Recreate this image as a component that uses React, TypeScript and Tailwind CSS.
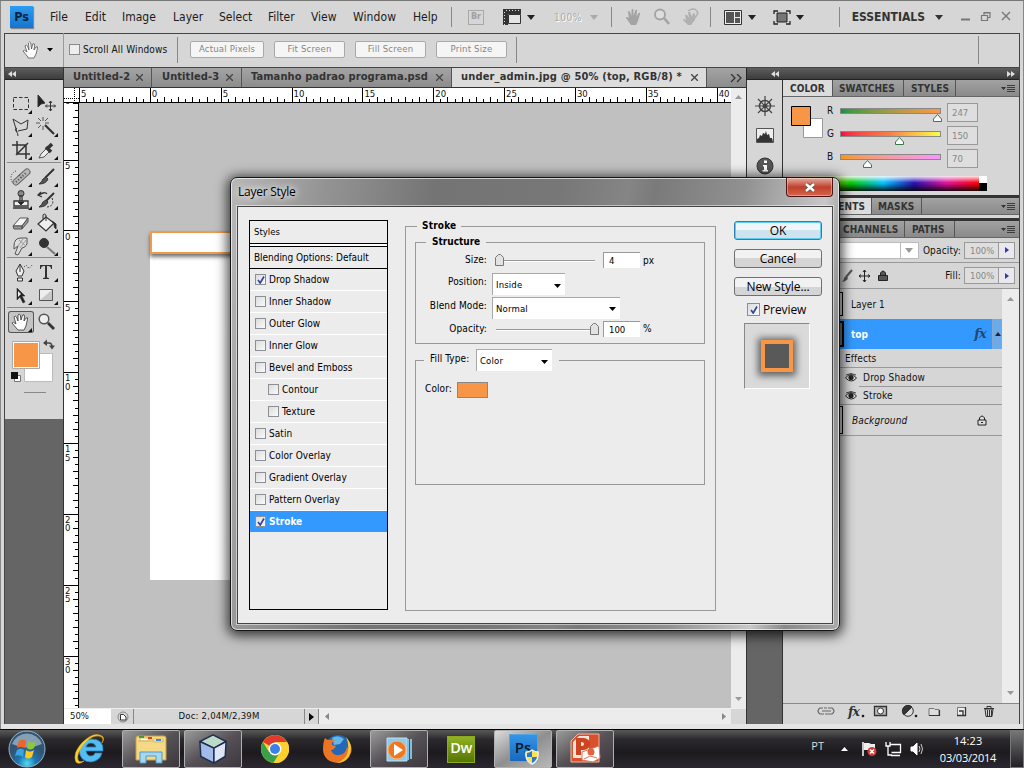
import React from "react";

const UI = "font-['DejaVu_Sans_Condensed','DejaVu_Sans',sans-serif]";
const SEGOE = "font-['Open_Sans','Noto_Sans',sans-serif]";

function Caret({ className = "" }: { className?: string }) {
  return (
    <svg width="8" height="5" viewBox="0 0 8 5" className={className}>
      <path d="M0 0h8L4 5z" fill="currentColor" />
    </svg>
  );
}

function MenuBar() {
  return (
    <div className="flex h-[33px] shrink-0 items-center border-t border-[#777] pl-[10px] text-[12px] text-[#1c1c1c]">
      <div className="flex h-[22px] w-[23px] items-center justify-center bg-gradient-to-b from-[#2f9bee] to-[#1374cf] text-[12.500px] font-bold leading-none text-[#06223f] shadow-[1px_1px_1px_#888]">
        Ps
      </div>
      <div className="ml-[17px] flex">
        <span className="w-[35px]">File</span>
        <span className="w-[37px]">Edit</span>
        <span className="w-[51px]">Image</span>
        <span className="w-[46px]">Layer</span>
        <span className="w-[49px]">Select</span>
        <span className="w-[43px]">Filter</span>
        <span className="w-[42px]">View</span>
        <span className="w-[60px] tracking-[.1px]">Window</span>
        <span className="w-[38px]">Help</span>
      </div>
      <div className="h-5 w-px bg-[#888]" />
      <div className="ml-[16px] flex h-[15px] w-[16px] items-center justify-center border border-[#a8a8a8] text-[9px] font-bold text-[#a0a0a0]">Br</div>
      <svg width="19" height="16" viewBox="0 0 19 16" className="ml-[19px]">
        <path d="M0 0h18v5H5v11H0z" fill="#333" />
        <path d="M5.500 5.500h12v9h-12z" fill="#e4e4e4" stroke="#333" />
        <path d="M3 1.500h15M1.500 3v13" stroke="#ddd" strokeDasharray="1 2" />
      </svg>
      <Caret className="ml-[5px] text-[#222]" />
      <span className="ml-[19px] text-[10px] tracking-[.5px] text-[#aaa] [text-shadow:1px_1px_0_#fff]">100%</span>
      <Caret className="ml-[8px] text-[#aaa]" />
      <div className="ml-[13px] h-5 w-px bg-[#888]" />
      <svg width="74" height="18" viewBox="0 0 74 18" className="ml-[14px]">
        <path d="M5 17L0 10q0-2 3 0L2 4q1-2 2 0l1.500 4V2q1-2 2 0v6l2-6q2-1 1.500 1L10.500 9l2-4q2-1 1.500 1l-2 7-2 4z" fill="#a3a3a3" />
        <circle cx="34" cy="6.500" r="5" fill="#ddd" stroke="#a3a3a3" strokeWidth="1.800" />
        <path d="M38 10l5 6" stroke="#a3a3a3" strokeWidth="2.500" />
        <path d="M62 17l-5-5q0-2 3 0l-1-5 2 0 2 3-1-6h2l2 5 1-4 2 1v6l-4 5z" fill="#b0b0b0" />
        <path d="M62 3q7-5 10 2l-3 5" fill="none" stroke="#b0b0b0" strokeWidth="1.500" />
      </svg>
      <div className="ml-[10px] h-5 w-px bg-[#888]" />
      <svg width="18" height="15" viewBox="0 0 18 15" className="ml-[13px]">
        <path d="M.5.500h17v14H.5z" fill="#eee" stroke="#333" />
        <path d="M2 2h8v11H2zM11 2h5v5h-5zM11 8h5v5h-5z" fill="#555" />
      </svg>
      <Caret className="ml-[6px] text-[#222]" />
      <svg width="18" height="15" viewBox="0 0 18 15" className="ml-[17px]">
        <path d="M4 3h10v9H4z" fill="#777" stroke="#222" />
        <path d="M1 4V1h4M13 1h4v3M17 11v3h-4M5 14H1v-3" fill="none" stroke="#222" strokeWidth="1.300" />
      </svg>
      <Caret className="ml-[5px] text-[#222]" />
      <div className="ml-[35px] h-5 w-px bg-[#888]" />
      <span className="ml-[12px] w-[75px] whitespace-nowrap text-[12px] font-bold tracking-[0px] text-[#333]">ESSENTIALS</span>
      <Caret className="ml-[8px] text-[#333]" />
      <svg width="50" height="12" viewBox="0 0 50 12" className="ml-[18px]" fill="none" stroke="#777">
        <path d="M0 8.500h9" strokeWidth="2" />
        <path d="M20.500 4.500h6v5h-6zM23 4V1.500h6v5h-2M23 2h6" strokeWidth="1.200" />
        <path d="M41 1l8 8m0-8l-8 8" strokeWidth="1.400" />
      </svg>
    </div>
  );
}

function OptionsBar() {
  const btn = "flex h-[17px] items-center justify-center rounded-[2px] border border-[#a9a9a9] bg-[#f5f5f5] text-[9.500px] tracking-[.2px] text-[#858585]";
  return (
    <div className="flex h-[34px] shrink-0 items-center border-b border-[#444] bg-[#d6d6d6] pb-[2px] text-[10px]">
      <div className="ml-[4px] h-[24px] w-[4px] bg-[radial-gradient(#777_35%,transparent_45%)] bg-[length:2px_2px]" />
      <svg width="18" height="18" viewBox="0 0 18 18" className="ml-[9px]">
        <path d="M6 16L1 10q1-2 4 1L3 5q1-2 2.500 0L7 9 6.500 2q1-2 2.300 0L9.500 8l1.200-5q2-1 2 1L12 9l2-3q2-1 1.500 1L14 13l-2 4H6z" fill="#fff" stroke="#555" strokeWidth=".8" />
      </svg>
      <svg width="6" height="4" className="ml-[7px]"><path d="M0 0h6L3 3.500z" /></svg>
      <div className="ml-[10px] h-[34px] w-px bg-[#999]" />
      <div className="ml-[5px] h-[11px] w-[11px] border border-[#8b8b8b] bg-[#eee]" />
      <span className="ml-[3px] w-[86px] whitespace-nowrap tracking-[.15px]">Scroll All Windows</span>
      <div className="ml-[8px] h-[26px] w-px bg-[#888]" />
      <div className={`ml-[12px] w-[74px] ${btn}`}>Actual Pixels</div>
      <div className={`ml-[10px] w-[71px] ${btn}`}>Fit Screen</div>
      <div className={`ml-[10px] w-[71px] ${btn}`}>Fill Screen</div>
      <div className={`ml-[10px] w-[71px] ${btn}`}>Print Size</div>
      <div className="ml-[9px] h-[26px] w-px bg-[#888]" />
      <div className="ml-auto mr-[40px] h-[28px] w-px bg-[#888]" />
    </div>
  );
}

function Tool({ children, mark = true, active = false }: { children: React.ReactNode; mark?: boolean; active?: boolean }) {
  return (
    <svg
      width="26"
      height="22"
      viewBox="0 0 26 22"
      fill="none"
      stroke="#333"
      className={active ? "rounded-[3px] bg-[#c4c4c4] shadow-[inset_0_0_0_1px_#555]" : ""}
    >
      {children}
      {mark && <path d="M24 17v4h-4z" fill="#111" stroke="none" />}
    </svg>
  );
}

function Toolbox() {
  const row = "flex h-[23px] items-center";
  const sep = "h-px bg-[#8a8a8a] mx-[2px]";
  return (
    <div className="flex w-[59px] shrink-0 flex-col border-r border-[#333] bg-[#656565]">
      <div className="flex h-[11px] shrink-0 items-center bg-gradient-to-b from-[#5e5e5e] to-[#3c3c3c] pl-[3px]">
        <svg width="8" height="6" fill="#ddd"><path d="M4 0v6L0 3zM8 0v6L4 3z" /></svg>
      </div>
      <div className="h-[340px] border-t border-[#222] bg-[#d6d6d6]">
        <div className="mx-[5px] mt-[4px] h-[4px] bg-[radial-gradient(#777_35%,transparent_45%)] bg-[length:2px_2px]" />
        <div className="mt-[4px] pb-[1px] pl-[3px]">
          <div className={row}>
            <Tool><path d="M5.500 4.500h15v12h-15z" strokeDasharray="3.500 2" /></Tool>
            <Tool mark={false}>
              <path d="M4 2v12l3-3 4-1z" fill="#222" />
              <path d="M16.500 8v10M11.500 13h10M15 10l1.500-2 1.500 2M15 16l1.500 2 1.500-2M13 11.500L11.500 13l1.500 1.500M20 11.500l1.500 1.500-1.500 1.500" />
            </Tool>
          </div>
          <div className={row}>
            <Tool><path d="M9 16L5 3l8 5 7-4-1 9-9 2M9 12q-3 1-1 3t2 5" strokeWidth="1" /></Tool>
            <Tool>
              <path d="M11 9l9 9" strokeWidth="2.200" />
              <path d="M9 1v4M9 10v4M2 7h4M11 7h4M4 2l3 3M14 2l-3 3M4 12l3-3" stroke="#555" />
            </Tool>
          </div>
          <div className={row}>
            <Tool><path d="M9 2v13h13M4 6h14v14M8 16L20 4" strokeWidth="1.500" /></Tool>
            <Tool>
              <path d="M5 19l2-4 6-6 3 3-6 6z" fill="#eee" stroke="#555" />
              <path d="M12 8l5 5M14 9l4-4" strokeWidth="3.500" />
            </Tool>
          </div>
        </div>
        <div className={sep} />
        <div className="pl-[3px] pt-[2px]">
          <div className={row}>
            <Tool>
              <path d="M8 5q-5 2-5 7t5 6" strokeDasharray="1 1.500" />
              <path d="M8 16L19 6" strokeWidth="7" strokeLinecap="round" stroke="#666" />
              <path d="M8 16L19 6" strokeWidth="5" strokeLinecap="round" stroke="#b7b7b7" />
              <path d="M8 16L19 6M11 9l4 4" strokeWidth="2" strokeDasharray="1 2" stroke="#555" />
            </Tool>
            <Tool>
              <path d="M20 3l-9 9" strokeWidth="2" />
              <path d="M12 11l2 2q-2 5-9 5 3-2 4-5z" fill="#555" />
            </Tool>
          </div>
          <div className={row}>
            <Tool>
              <circle cx="13" cy="4.500" r="3" fill="#888" />
              <path d="M12 7h2v5h-2zM6 12h14v5H6zM5 19h16" fill="#eee" strokeWidth="1.300" />
              <path d="M10 13h6l-3 3z" fill="#222" />
            </Tool>
            <Tool>
              <path d="M20 4l-8 8" strokeWidth="2" />
              <path d="M12 11l2 2q-2 5-9 5 3-2 4-5z" fill="#555" />
              <path d="M7 3L4 6l4 2M5 6q6-4 8-1" strokeWidth="1.300" />
              <path d="M18 9q3 8-5 9" strokeDasharray="2 1.500" />
            </Tool>
          </div>
          <div className={row}>
            <Tool>
              <path d="M5 14l7-8h8l-6 8z" fill="#f4f4f4" stroke="#555" />
              <path d="M5 14h9v3H6zM14 14l6-8v4l-6 7z" fill="#999" stroke="#555" />
            </Tool>
            <Tool>
              <path d="M4 12l8-7 8 6-8 8z" fill="#eee" strokeWidth="1.200" />
              <path d="M12 9V3q-2-2-3 0v4" />
              <path d="M18 9l4 3v5q-2-1-2-5z" fill="#222" />
            </Tool>
          </div>
          <div className={row}>
            <Tool>
              <path d="M6 11q0-8 7-8h6v6q-2 4-5 4l-4 7-3-1 3-8-4 3z" fill="#ddd" stroke="#555" />
              <path d="M11 5l7 6M15 4l-5 7M18 5l-6 8" stroke="#999" />
            </Tool>
            <Tool>
              <circle cx="10" cy="8" r="4.500" fill="#333" />
              <path d="M13 12l8 7" stroke="#777" strokeWidth="2" />
            </Tool>
          </div>
        </div>
        <div className={sep} />
        <div className="pb-[1px] pl-[3px] pt-[2px]">
          <div className={row}>
            <Tool>
              <path d="M12 3l4 7-2 5h-4l-2-5zM12 4v7M9.500 17h5v3h-5z" fill="#eee" />
              <path d="M16 6q3-3 4 0t4-2" strokeDasharray="1 1.500" />
            </Tool>
            <Tool>
              <path d="M6 4h12v4h-1q0-3-3-3h-1v11q0 1 2 1v1H9v-1q2 0 2-1V5h-1Q7 5 7 8H6z" fill="#333" stroke="none" />
            </Tool>
          </div>
          <div className={row}>
            <Tool><path d="M9 4v12l3-3 3 6 2-1-3-6h3z" fill="#222" strokeWidth=".6" /><path d="M10 7v6l3-3z" fill="#eee" stroke="none" /></Tool>
            <Tool>
              <path d="M5.500 5.500h13v11h-13z" fill="#c8c8c8" stroke="#555" />
              <path d="M6 16V6h12z" fill="#eee" stroke="none" />
            </Tool>
          </div>
        </div>
        <div className={sep} />
        <div className="pl-[3px] pt-[2px]">
          <div className={row}>
            <Tool active>
              <path d="M10 19L4 12q1-2 4 1L6 6q1-2 2.500 0L10 10 10 4q1-2 2.300 0L13 9l1.500-5q2-1 2 1L16 10l2-3q2-1 1.500 1L18 15l-2 4z" fill="#fff" strokeWidth=".8" />
            </Tool>
            <Tool mark={false}>
              <circle cx="10" cy="8" r="4.800" fill="#eee" stroke="#555" strokeWidth="1.500" />
              <path d="M14 12l6 6" strokeWidth="2.800" />
            </Tool>
          </div>
        </div>
        <svg width="50" height="60" viewBox="0 0 50 60" className="ml-[4px] mt-[4px]">
          <path d="M15.500 16.500h28v28h-28z" fill="#fff" stroke="#bbb" />
          <path d="M3.500 4.500h27v27h-27z" fill="#fff" stroke="#aaa" />
          <path d="M5 6h24v24H5z" fill="#f79646" />
          <path d="M36 6h4q3 0 3 4" fill="none" stroke="#444" strokeWidth="1.500" />
          <path d="M38 2.500L34 6l4 3zM40 8.500h6l-3 4z" fill="#444" />
          <path d="M5.500 38.500h6v6h-6z" fill="#fff" stroke="#777" />
          <path d="M2 35h7v7H2z" fill="#111" />
          <path d="M15 55.500h22" stroke="#888" />
        </svg>
      </div>
    </div>
  );
}

const TICKS = Array.from({ length: 95 }, (_, i) => i);

function TopRuler() {
  const labels = ["5", "0", "5", "10", "15", "20", "25", "30", "35", "40"];
  return (
    <svg width="667" height="15" viewBox="0 0 667 15" className="block bg-white">
      {TICKS.map((i) => (
        <rect key={i} x={Math.round(15 + i * 7.085)} y={i % 10 === 0 ? 0 : i % 2 === 0 ? 9 : 11} width="1" height="14" />
      ))}
      {labels.map((t, i) => (
        <text key={i} x={17 + i * 70.85} y="8.500" fontSize="9.500" fill="#111">{t}</text>
      ))}
      <path d="M0 10.500h15M10.500 0v15" stroke="#000" strokeDasharray="1 1" />
      <rect x="0" y="14" width="667" height="1" />
      <rect x="15" y="0" width="1" height="15" />
    </svg>
  );
}

function SideRuler() {
  const labels = ["0", "5", "0", "5", "10", "15", "20", "25", "30"];
  return (
    <svg width="15" height="605" viewBox="0 0 15 605" className="block shrink-0 bg-white">
      {TICKS.slice(0, 92).map((i) => {
        const y = Math.round(-14.3 + i * 7.085);
        return <rect key={i} y={y} x={i % 10 === 0 ? 0 : i % 2 === 0 ? 9 : 11} width="14" height="1" />;
      })}
      {labels.map((t, i) =>
        t.split("").map((c, j) => (
          <text key={`${i}-${j}`} x="1" y={-14.3 + i * 70.85 + 9.300 + (i === 0 ? 6 : 0) + j * 8.300} fontSize="9.500" fill="#111">{c}</text>
        )),
      )}
      <rect x="14" width="1" height="605" />
    </svg>
  );
}

function DocTab({ children, className }: { children: string; className: string }) {
  return (
    <div className={`flex items-center whitespace-nowrap border-r border-[#555] pl-[9px] pr-[8px] ${className}`}>
      <span className="flex-1">{children}</span>
      <svg width="7" height="7" stroke="#444" strokeWidth="1.300"><path d="M0 0l7 7m0-7l-7 7" /></svg>
    </div>
  );
}

function Workspace() {
  return (
    <div className="flex w-[682px] shrink-0 flex-col">
      <div className="flex h-[20px] border-b border-[#333] bg-gradient-to-b from-[#a4a4a4] to-[#8c8c8c] text-[11px] font-bold text-[#333]">
        <DocTab className="w-[88px] tracking-[.1px]">Untitled-2</DocTab>
        <DocTab className="w-[90px] pl-[10px] tracking-[.1px]">Untitled-3</DocTab>
        <DocTab className="w-[210px] tracking-[.1px]">Tamanho padrao programa.psd</DocTab>
        <DocTab className="w-[255px] bg-[#dcdcdc] tracking-[.17px]">under_admin.jpg @ 50% (top, RGB/8) *</DocTab>
        <svg width="12" height="9" className="ml-[23px] mt-[6px]" fill="none" stroke="#333" strokeWidth="1.300"><path d="M1 0l4 4-4 4M7 0l4 4-4 4" /></svg>
      </div>
      <div className="flex h-[620px]">
        <div className="flex w-[667px] flex-col">
          <TopRuler />
          <div className="flex h-[605px]">
            <SideRuler />
            <div className="flex-1 overflow-hidden bg-[#c0c0c0] pl-[71px] pt-[128px]">
              <div className="h-[349px] w-[400px] bg-white">
                <div className="h-[23px] border-2 border-[#f09a4c] bg-white shadow-[0_3px_4px_rgba(0,0,0,.55)]" />
              </div>
            </div>
          </div>
        </div>
        <div className="flex flex-1 flex-col items-center justify-between bg-[#ececec] py-[7px]">
          <svg width="7" height="4"><path d="M0 4h7L3.500 0z" fill="#999" /></svg>
          <svg width="7" height="4"><path d="M0 0h7L3.500 4z" fill="#999" /></svg>
        </div>
      </div>
      <div className="flex h-[16px] items-center border-t border-[#eee] bg-[#d6d6d6] text-[9.500px]">
        <div className="flex h-full w-[47px] items-center bg-white pl-[6px]">50%</div>
        <svg width="12" height="12" className="ml-[6px]" fill="none" stroke="#333"><circle cx="6" cy="6" r="5" stroke="#888" /><path d="M3.500 3.500h3l2.500 2.500v3h-5.500z" fill="#fff" /></svg>
        <div className="ml-[4px] flex h-full w-[171px] items-center justify-center border-l border-[#888] tracking-[.2px]">Doc: 2,04M/2,39M</div>
        <div className="flex h-full w-[15px] items-center justify-center border-x border-[#888]"><svg width="5" height="8"><path d="M0 0v8l5-4z" /></svg></div>
        <div className="flex h-full flex-1 items-center justify-between bg-[#ececec] pl-[6px] pr-[5px]">
          <svg width="4" height="7"><path d="M4 0v7L0 3.500z" fill="#888" /></svg>
          <svg width="4" height="7"><path d="M0 0v7l4-3.500z" fill="#888" /></svg>
        </div>
        <div className="h-full w-[15px] bg-[#d6d6d6]" />
      </div>
    </div>
  );
}

function PanelTabs({ children, className = "" }: { children: React.ReactNode; className?: string }) {
  return (
    <div className={`flex h-[17px] shrink-0 border-b border-[#666] bg-gradient-to-b from-[#a2a2a2] to-[#8a8a8a] text-[10px] font-bold tracking-[.1px] text-[#333] ${className}`}>
      {children}
      <svg width="14" height="8" className="ml-auto mr-[4px] mt-[5px]" stroke="#333">
        <path d="M0 2h5L2.500 5z" fill="#333" stroke="none" />
        <path d="M6 .5h8M6 2.500h8M6 4.500h8M6 6.500h8" strokeWidth=".9" />
      </svg>
    </div>
  );
}

function PTab({ children, className }: { children: string; className: string }) {
  return <div className={`flex h-full items-center whitespace-nowrap border-r border-[#555] ${className}`}>{children}</div>;
}

function ColorRow({ label, value, grad, thumb }: { label: string; value: string; grad: string; thumb: string }) {
  return (
    <div className="flex h-[23px] items-start">
      <span className="w-[13px] text-[10px] leading-[9px]">{label}</span>
      <div className="mt-[2px] w-[101px]">
        <div className={`h-[6px] border border-[#888] bg-gradient-to-r ${grad}`} />
        <svg width="9" height="8" className={thumb}><path d="M4.500.500L8.500 5v2.500h-8V5z" fill="#fff" stroke="#3a7a4a" /></svg>
      </div>
      <div className="ml-[6px] mt-[-3px] h-[19px] w-[31px] border border-[#999] bg-[#dedede] pl-[4px] text-[9.500px] leading-[18px] text-[#888]">{value}</div>
    </div>
  );
}

function Eye() {
  return (
    <svg width="12" height="9" viewBox="0 0 12 9" className="shrink-0">
      <path d="M.5 5q5-7 11 0-5 6-11 0z" fill="#ddd" stroke="#222" />
      <circle cx="6" cy="4.500" r="2.600" fill="#222" />
      <path d="M1 2q5-3 10 0" stroke="#444" fill="none" />
    </svg>
  );
}

function Percent({ label }: { label: string }) {
  return (
    <div className="flex items-center text-[10px]">
      <span className="mr-[3px] tracking-[.15px]">{label}</span>
      <div className="h-[17px] w-[35px] border border-[#999] bg-[#dedede] pl-[5px] text-[9.500px] leading-[15px] text-[#888]">100%</div>
      <div className="flex h-[17px] w-[16px] items-center justify-center border border-l-0 border-[#999] bg-[#e8e8ee]"><svg width="4" height="6"><path d="M0 0v6l4-3z" fill="#3a3a99" /></svg></div>
    </div>
  );
}

function Lock() {
  return <svg width="10" height="11" viewBox="0 0 10 11"><path d="M2.500 5V3q2.500-4 5 0v2M1 5h8v5H1zM4 7.500h2" fill="#ddd" stroke="#222" /></svg>;
}

function Layers() {
  return (
    <>
      <PanelTabs>
        <div className="w-[54px]" />
        <PTab className="w-[68px] pl-[6px]">CHANNELS</PTab>
        <PTab className="w-[50px] pl-[7px]">PATHS</PTab>
      </PanelTabs>
      <div className="flex h-[25px] items-center justify-end border-b border-[#999] pr-[4px]">
        <div className="mr-[4px] flex h-[17px] w-[120px] border border-[#bbb] bg-white">
          <div className="flex-1" />
          <div className="flex w-[18px] items-center justify-center border-l border-[#bbb]"><Caret className="text-[#999]" /></div>
        </div>
        <Percent label="Opacity:" />
      </div>
      <div className="flex h-[26px] items-center border-b border-[#999] pr-[4px]">
        <svg width="52" height="14" viewBox="0 0 52 14" className="ml-[57px]" fill="none" stroke="#222">
          <path d="M12 1L6 8" strokeWidth="2" stroke="#555" /><path d="M6 7l2 2q-1 3-6 4 2-2 2-4z" fill="#555" stroke="none" />
          <path d="M24.500 1v12M19 7h11M23 3l1.500-2L26 3M23 11l1.500 2 1.500-2M21 5.500L19 7l2 1.500M28 5.500L30 7l-2 1.500" />
          <path d="M40.500 6V4q2.500-4 5 0v2M38.500 6.500h9v5h-9z" fill="#555" />
        </svg>
        <div className="flex-1" />
        <Percent label="Fill:" />
      </div>
      <div className="flex flex-1 text-[10px]">
        <div className="w-[219px]">
          <div className="flex h-[30px] items-center"><div className="h-[24px] w-[60px] border border-black" /><span className="ml-[8px]">Layer 1</span></div>
          <div className="flex h-[30px] items-center bg-[#3399ff] font-bold text-white">
            <div className="h-[26px] w-[61px] border-2 border-black bg-[#777]" />
            <span className="ml-[7px] flex-1">top</span>
            <span className="mr-[6px] font-['DejaVu_Serif',serif] text-[13px] italic tracking-[-.8px] text-[#26466c]">fx</span>
            <div className="flex h-full w-[10px] items-center justify-center border-l border-[#87a8cc] bg-[#6babea]"><svg width="6" height="4"><path d="M0 4h6L3 0z" fill="#223" /></svg></div>
          </div>
          <div className="flex h-[18px] items-center pl-[62px] tracking-[.1px]">Effects</div>
          <div className="flex h-[19px] items-center gap-[6px] border-t border-[#999] pl-[62px] tracking-[.2px]"><Eye />Drop Shadow</div>
          <div className="ml-[76px] h-px bg-[#999]" />
          <div className="flex h-[18px] items-center gap-[6px] border-b border-[#999] pl-[62px] tracking-[.2px]"><Eye />Stroke</div>
          <div className="flex h-[31px] items-center border-b border-[#999] pr-[15px]">
            <div className="h-[28px] w-[60px] border border-black" />
            <span className="ml-[9px] flex-1 italic tracking-[.15px]">Background</span>
            <Lock />
          </div>
        </div>
        <div className="flex flex-1 flex-col items-center justify-between bg-[#ececec] py-[8px]">
          <svg width="7" height="4"><path d="M0 4h7L3.500 0z" fill="#999" /></svg>
          <svg width="7" height="4"><path d="M0 0h7L3.500 4z" fill="#999" /></svg>
        </div>
      </div>
      <div className="flex h-[21px] shrink-0 items-center border-t border-[#888] pb-[6px]">
        <svg width="190" height="16" viewBox="0 0 190 16" className="ml-[34px]" fill="none" stroke="#333">
          <path d="M6 5H3q-4 3 0 6h4M11 5h4q4 3 0 6h-4M5 8h9M7 5l3 0M8 11h3" stroke="#666" strokeWidth="1.200" />
          <text x="31" y="13" fontSize="12.500" letterSpacing="-.8" fontStyle="italic" fontWeight="bold" fill="#333" stroke="none" className="font-['DejaVu_Serif',serif]">fx</text>
          <path d="M45 12h2v2h-2z" fill="#111" strokeWidth=".4" />
          <path d="M57.500 3.500h12v9h-12z" fill="#bbb" strokeWidth="1.300" /><circle cx="63.500" cy="8" r="3" fill="#fff" />
          <circle cx="91" cy="8" r="5.300" fill="#ddd" /><path d="M87 12a5.500 5.500 0 0 1 8-8z" fill="#333" /><path d="M98 12h2v2h-2z" fill="#111" strokeWidth=".4" />
          <path d="M112 12.500V5.500h5l1 1h4v6z" fill="#ddd" stroke="#777" /><path d="M112 12.500h10.500V7" strokeWidth="1.200" />
          <path d="M140.500 4.500h8v8h-8z" fill="#eee" stroke="#777" /><path d="M148.500 4v8.500h-8.500M142 8h4v4" strokeWidth="1.300" />
          <path d="M168 6h8l-1 7.500h-6zM167 5.500h10M170 5V3.500h4V5M170.500 7v6M172.500 7v6M174.500 7v6" />
        </svg>
      </div>
    </>
  );
}

function RightDock() {
  return (
    <div className="flex flex-1 flex-col bg-[#656565]">
      <div className="flex h-[11px] shrink-0 items-center justify-between border-l border-[#222] bg-gradient-to-b from-[#5e5e5e] to-[#3c3c3c] pl-[24px] pr-[4px]">
        <svg width="8" height="6" fill="#ddd"><path d="M4 0v6L0 3zM8 0v6L4 3z" /></svg>
        <svg width="8" height="6" fill="#ddd"><path d="M0 0v6l4-3zM4 0v6l4-3z" /></svg>
      </div>
      <div className="flex flex-1 border-t border-[#222]">
        <div className="w-[37px] shrink-0 border-x border-[#333]">
          <div className="flex h-[400px] flex-col items-center bg-[#d6d6d6]">
            <div className="mt-[4px] h-[4px] w-[27px] bg-[radial-gradient(#777_35%,transparent_45%)] bg-[length:2px_2px]" />
            <svg width="20" height="20" viewBox="0 0 20 20" className="mt-[8px]" fill="none" stroke="#444">
              <circle cx="10" cy="10" r="5.500" strokeWidth="1.500" /><circle cx="10" cy="10" r="2" fill="#555" />
              <path d="M10 0v20M0 10h20M3 3l14 14M17 3L3 17" strokeWidth="1.200" />
            </svg>
            <svg width="18" height="15" viewBox="0 0 18 15" className="mt-[12px]">
              <path d="M.5.500h17v14H.5z" fill="#eee" stroke="#555" />
              <path d="M1 14v-3l2-1 1-3 2 1 1-3 2 1 1-3 1 4 2-1 1 4 2 0 1 4z" fill="#333" />
            </svg>
            <svg width="18" height="18" viewBox="0 0 18 18" className="mt-[14px]">
              <circle cx="9" cy="9" r="8" fill="#555" stroke="#333" />
              <path d="M8 3.500h3v2.500H8zM7 8h4v5h1v1.500H6.500V13H8V9.500H7z" fill="#fff" />
            </svg>
          </div>
        </div>
        <div className="flex flex-1 flex-col bg-[#d6d6d6]">
          <PanelTabs>
            <PTab className="w-[50px] bg-[#dcdcdc] pl-[7px]">COLOR</PTab>
            <PTab className="w-[71px] pl-[6px]">SWATCHES</PTab>
            <PTab className="w-[52px] pl-[7px]">STYLES</PTab>
          </PanelTabs>
          <div className="h-[98px] shrink-0 pt-[9px]">
            <div className="flex h-[70px] pl-[8px]">
              <svg width="36" height="36" viewBox="0 0 36 36" className="shrink-0">
                <path d="M12.500 12.500h19v19h-19z" fill="#fff" stroke="#999" />
                <path d="M.5.500h19v19H.5z" fill="#f79646" stroke="#000" />
              </svg>
              <div className="flex flex-1 flex-col">
                <ColorRow label="R" value="247" grad="from-[#009646] to-[#ff9646]" thumb="ml-[93px]" />
                <ColorRow label="G" value="150" grad="from-[#f70046] via-[#f78046] to-[#f7ff46]" thumb="ml-[55px]" />
                <ColorRow label="B" value="70" grad="from-[#f79600] to-[#f796ff]" thumb="ml-[23px]" />
              </div>
            </div>
            <div className="ml-[5px] flex h-[15px] w-[199px]">
              <div className="flex-1 bg-[linear-gradient(to_bottom,rgba(255,255,255,.9),rgba(255,255,255,0)_45%,rgba(0,0,0,0)_50%,rgba(0,0,0,.85)),linear-gradient(to_right,#f00,#ff0_16%,#0c0_33%,#00bfff_50%,#2a10b0_66%,#e0109a_83%,#f00)]" />
              <div className="w-[8px] bg-gradient-to-b from-white from-50% to-black to-50%" />
            </div>
          </div>
          <div className="h-[3px] shrink-0 bg-[#333]" />
          <PanelTabs>
            <PTab className="w-[89px] justify-end bg-[#dcdcdc] pr-[6px]">ADJUSTMENTS</PTab>
            <PTab className="w-[50px] pl-[6px]">MASKS</PTab>
          </PanelTabs>
          <div className="h-[6px] shrink-0 border-b-[3px] border-[#333]" />
          <Layers />
        </div>
      </div>
    </div>
  );
}

function Check({ on = false, size = "h-[11px] w-[11px]" }: { on?: boolean; size?: string }) {
  return (
    <span className={`flex shrink-0 items-center justify-center border border-[#8c8f94] bg-gradient-to-br from-[#dcdcdc] to-[#fafafa] ${size}`}>
      {on && <svg width="8" height="8" viewBox="0 0 8 8"><path d="M1 4l2.200 3L7 .5" fill="none" stroke="#31479c" strokeWidth="1.700" /></svg>}
    </span>
  );
}

function StyleRow({ label, on, sub }: { label: string; on?: boolean; sub?: boolean }) {
  return (
    <div className={`flex h-[22px] items-center gap-[3px] border-b border-white ${sub ? "pl-[18px]" : "pl-[5px]"}`}>
      <Check on={on} />
      <span className="whitespace-nowrap tracking-[.05px]">{label}</span>
    </div>
  );
}

function Slider({ end = false }: { end?: boolean }) {
  return (
    <svg width="110" height="14" viewBox="0 0 110 14">
      <path d="M4 7.500h99" stroke="#999" /><path d="M4 8.500h99" stroke="#fff" />
      <path d={end ? "M98.500 12.500v-8l3-3h2l3 3v8z" : "M3.500 12.500v-8l3-3h2l3 3v8z"} fill="#e2e2e2" stroke="#777" />
    </svg>
  );
}

function Select({ children, className }: { children: string; className: string }) {
  return (
    <div className={`flex h-[22px] items-center justify-between border-l border-t border-[#a8a8a8] bg-white pl-[3px] pr-[4px] pt-[2px] text-[9.500px] tracking-[.15px] ${className}`}>
      <span>{children}</span>
      <svg width="7" height="4"><path d="M0 0h7L3.500 4z" /></svg>
    </div>
  );
}

function Field({ children }: { children: string }) {
  return <div className="h-[16px] w-[37px] border-l border-t border-[#999] bg-white pl-[5px] text-[9.500px] leading-[16px]">{children}</div>;
}

function LayerStyleDialog() {
  const label = "w-[71px] shrink-0 whitespace-nowrap text-right tracking-[.1px] pb-[2px]";
  return (
    <div className="absolute left-[230px] top-[177px] flex h-[454px] w-[610px] flex-col rounded-[7px] border border-[#151515] bg-[linear-gradient(100deg,#b8b8b8_0%,#939393_14%,#8c8c8c_18%,#747474_30%,#777_48%,#858585_58%,#7a7a7a_62%,#919191_75%,#c8c8c8_87%,#8a8a8a_92%,#aaa_100%)] px-[6px] pb-[6px] shadow-[0_2px_12px_3px_rgba(0,0,0,.7),inset_0_0_0_1px_rgba(255,255,255,.65)]">
      <div className="flex h-[28px] shrink-0 justify-between">
        <span className={`pl-[1px] pt-[4px] text-[12px] leading-[19px] tracking-[-.25px] text-black [text-shadow:0_0_8px_#fff,0_0_6px_#fff] ${SEGOE}`}>Layer Style</span>
        <div className="flex h-[19px] w-[47px] items-center justify-center rounded-b-[4px] border border-t-0 border-[#4c1515] bg-gradient-to-b from-[#e1a193] from-5% via-[#bd402c] via-50% to-[#d9634a] shadow-[inset_0_0_0_1px_rgba(255,255,255,.35)]">
          <svg width="12" height="11" viewBox="0 0 12 11"><path d="M2 2l8 7m0-7L2 9" stroke="#554" strokeWidth="4" /><path d="M2 2l8 7m0-7L2 9" stroke="#fff" strokeWidth="2.500" /></svg>
        </div>
      </div>
      <div className="flex flex-1 border border-[#444] bg-[#ececec] pl-[11px] pt-[13px] text-[10px] text-black shadow-[0_0_0_1px_rgba(255,255,255,.5)]">
        <div className="h-[390px] w-[139px] border border-black">
          <div className="flex h-[22px] items-center pl-[4px] text-[9.500px]">Styles</div>
          <div className="h-[4px] border-y border-black bg-white" />
          <div className="flex h-[22px] items-center whitespace-nowrap border-b border-black pl-[4px] tracking-[-.05px]">Blending Options: Default</div>
          <StyleRow label="Drop Shadow" on />
          <StyleRow label="Inner Shadow" />
          <StyleRow label="Outer Glow" />
          <StyleRow label="Inner Glow" />
          <StyleRow label="Bevel and Emboss" />
          <StyleRow label="Contour" sub />
          <StyleRow label="Texture" sub />
          <StyleRow label="Satin" />
          <StyleRow label="Color Overlay" />
          <StyleRow label="Gradient Overlay" />
          <StyleRow label="Pattern Overlay" />
          <div className="flex h-[21px] items-center gap-[3px] bg-[#3399ff] pl-[5px] font-bold text-white"><Check on />Stroke</div>
        </div>
        <fieldset className="ml-[17px] h-[391px] w-[311px] border border-[#999] px-[9px]">
          <legend className="ml-[2px] px-[5px] text-[10px] font-bold leading-[12px] tracking-[.2px]">Stroke</legend>
          <fieldset className="mt-[4px] h-[108px] w-[290px] border border-[#999]">
            <legend className="ml-[10px] px-[6px] text-[10px] font-bold leading-[12px]">Structure</legend>
            <div className="flex h-[24px] items-center"><span className={label}>Size:</span><div className="ml-[5px]"><Slider /></div><div className="ml-[1px] mr-[3px]"><Field>4</Field></div>px</div>
            <div className="flex h-[24px] items-center"><span className={`${label} pb-[5px]`}>Position:</span><Select className="ml-[5px] w-[73px]">Inside</Select></div>
            <div className="flex h-[23px] items-center"><span className={`${label} pb-[5px]`}>Blend Mode:</span><Select className="ml-[5px] w-[128px]">Normal</Select></div>
            <div className="flex h-[20px] items-center"><span className={label}>Opacity:</span><div className="ml-[5px]"><Slider end /></div><div className="ml-[1px] mr-[3px]"><Field>100</Field></div><span className="pb-[2px]">%</span></div>
          </fieldset>
          <fieldset className="mt-[5px] h-[136px] w-[290px] border border-[#999]">
            <legend className="ml-[8px] flex h-[22px] items-center pl-[6px] pr-[7px]"><span className="w-[46px] shrink-0 whitespace-nowrap pb-[4px] tracking-[.1px]">Fill Type:</span><Select className="w-[76px]">Color</Select></legend>
            <div className="mt-[10px] flex items-center pl-[9px]"><span className="w-[32px] shrink-0 pb-[2px] tracking-[.1px]">Color:</span><div className="h-[16px] w-[31px] border border-[#888] bg-[#f79646]" /></div>
          </fieldset>
        </fieldset>
        <div className={`ml-[18px] flex w-[88px] flex-col pt-[1px] text-[12px] tracking-[-.1px] ${SEGOE}`}>
          <div className="flex h-[19px] items-center justify-center rounded-[3px] border border-[#2c7fae] bg-gradient-to-b from-[#eef6fa] from-50% to-[#cfe3ee] to-50% shadow-[inset_0_0_0_1px_#5fcdf0]">OK</div>
          <div className="mt-[9px] flex h-[19px] items-center justify-center rounded-[3px] border border-[#707070] bg-gradient-to-b from-[#f2f2f2] from-50% to-[#d5d5d5] to-50%">Cancel</div>
          <div className="mt-[9px] flex h-[19px] items-center justify-center whitespace-nowrap rounded-[3px] border border-[#707070] bg-gradient-to-b from-[#f2f2f2] from-50% to-[#d5d5d5] to-50%">New Style...</div>
          <div className="mt-[4px] flex h-[19px] items-center gap-[3px] pl-[13px]"><Check on size="h-[13px] w-[13px]" />Preview</div>
          <div className="ml-[10px] mt-[4px] flex h-[66px] w-[66px] items-center justify-center border border-b-white border-r-white border-l-[#888] border-t-[#888] bg-[#dadada]">
            <div className="h-[32px] w-[32px] border-4 border-[#f79646] bg-[#595959] shadow-[0_1px_7px_3px_rgba(0,0,0,.55)]" />
          </div>
        </div>
      </div>
    </div>
  );
}

function TaskButton({ children, className = "from-[#9b9b9b] via-[#555156] to-[#3c383d]" }: { children: React.ReactNode; className?: string }) {
  return <div className={`flex h-[38px] w-[58px] items-center justify-center rounded-[2px] border border-[#b0b0b0] bg-gradient-to-br ${className}`}>{children}</div>;
}

function Taskbar() {
  return (
    <div className="flex h-[39px] shrink-0 items-center border-t border-black bg-[linear-gradient(to_bottom,#595959,#2b292c_25%,#1c1a1e_60%,#2c2831)]">
      <svg width="38" height="38" viewBox="0 0 38 38" className="ml-[8px]">
        <defs>
          <radialGradient id="orb" cx=".5" cy=".9"><stop offset="0" stopColor="#50dcf5" /><stop offset=".5" stopColor="#1e75ad" /><stop offset="1" stopColor="#335574" /></radialGradient>
        </defs>
        <circle cx="19" cy="19" r="18" fill="url(#orb)" stroke="#94b5c8" />
        <path d="M4 14a16 16 0 0 1 30 0q-15 7-30 0z" fill="#bcd1de" opacity=".6" />
        <path d="M11 11q4-3 7 0l-1 7q-4-2-8 0z" fill="#f0642b" />
        <path d="M20 11q4 3 8 0l-2 7q-4 3-7 0z" fill="#8ec63f" />
        <path d="M9 20q4-3 7 0l-1 7q-4-3-8-1z" fill="#39a5e4" />
        <path d="M18 20q4 3 8 0l-2 7q-4 3-7 0z" fill="#fdc922" />
      </svg>
      <svg width="32" height="32" viewBox="0 0 32 32" className="ml-[28px]">
        <path d="M28 20h-7q-1 3-4 3-4 0-5-5h17q1-12-12-12Q6 7 5 17q1 12 12 12 9-1 11-9zM12 14q1-4 5-4t5 4z" fill="#56bdf0" stroke="#1a83c8" strokeWidth=".8" />
        <path d="M28 3q-8-5-19 6T2 29q3 3 8-1-5 2-6-1Q2 20 11 10T28 4q2 2 0 6 3-5 0-7z" fill="#fcd12a" stroke="#e5ab1a" strokeWidth=".6" />
      </svg>
      <TaskButton className="ml-[16px] from-[#9b9b9b] via-[#555156] to-[#3c383d]">
        <svg width="34" height="32" viewBox="0 0 34 32">
          <path d="M2 5q0-2 2-2h26q2 0 2 2v22H2z" fill="#f4da87" stroke="#c7a043" />
          <path d="M4 8h26M6 5h9v3H6zM19 6h10v3H19z" fill="#fff" stroke="#d9ba62" />
          <path d="M5 3h5v2H5z" fill="#3b9b4a" /><path d="M14 4h4v2h-4z" fill="#d5422f" /><path d="M22 6h5v2h-5z" fill="#3f86d8" />
          <path d="M6 30V19h22v11h-6v-7H12v7z" fill="#a5d7f1" stroke="#5099c2" />
        </svg>
      </TaskButton>
      <TaskButton className="ml-[4px] from-[#9b9b9b] via-[#555156] to-[#3c383d]">
        <svg width="30" height="32" viewBox="0 0 32 34" stroke="#1e2f50" strokeWidth="1.600" strokeLinejoin="round">
          <path d="M2 9l14-7 14 7-13 7z" fill="#bdd9c8" /><path d="M2 9l15 7v16L3 25z" fill="#a3bbea" /><path d="M30 9l-13 7v16l12-7z" fill="#dde5f6" />
        </svg>
      </TaskButton>
      <svg width="28" height="28" viewBox="0 0 28 28" className="ml-[19px]">
        <circle cx="14" cy="14" r="14" fill="#fcd02d" />
        <path d="M14 14L1.900 7A14 14 0 0 1 26.100 7H14z" fill="#e13b2e" />
        <path d="M14 14L8 17 1.900 7A14 14 0 0 0 12.500 27.900L19 17z" fill="#3ba04a" />
        <path d="M14 7h12.100A14 14 0 0 1 12.500 28L20 17z" fill="#fcd02d" />
        <circle cx="14" cy="14" r="6.500" fill="#fff" /><circle cx="14" cy="14" r="5" fill="#3c80e8" />
      </svg>
      <svg width="30" height="30" viewBox="0 0 30 30" className="ml-[33px]">
        <circle cx="16" cy="14" r="13" fill="#2467b6" /><path d="M10 4q6-4 12 1l-4 5-6 1z" fill="#61b7e6" />
        <path d="M3 4q2 2 4 2 4-1 6 1-4 1-3 4l4 1q-2 4-5 4 2 6 8 5 7-1 8-8 2 1 1 4 3-5 0-10 5 5 3 12-3 9-13 10Q2 28 1 16 1 8 3 4z" fill="#ed7422" />
        <path d="M24 3q8 9 3 19-4 7-12 7 10-4 11-12t-2-14z" fill="#fbc82c" />
      </svg>
      <TaskButton className="ml-[18px] from-[#9b9b9b] via-[#555156] to-[#3c383d]">
        <svg width="27" height="27" viewBox="0 0 27 27">
          <path d="M1 2h20v23H1z" fill="#92c9e8" stroke="#bfe1f3" /><path d="M22 3v21M25 3v20" stroke="#85bde0" strokeWidth="2" />
          <circle cx="11" cy="14" r="9" fill="#ee7821" stroke="#ffb36c" /><path d="M8 8v12l9-6z" fill="#fff" />
        </svg>
      </TaskButton>
      <div className={`ml-[19px] flex h-[27px] w-[28px] items-center justify-center border border-[#8bab1f] bg-gradient-to-b from-[#90b222] to-[#567504] pb-[2px] text-[14.500px] font-semibold tracking-[-.5px] text-white ${SEGOE}`}>Dw</div>
      <TaskButton className="ml-[19px] from-[#ddd] via-[#8f8f8f] to-[#b9b9b9]">
        <div className="relative mb-[3px] flex h-[28px] w-[29px] items-center justify-center border border-[#56a6e4] bg-gradient-to-b from-[#3395e6] to-[#1869be]">
          <span className={`text-[15px] font-semibold text-[#08172a] ${SEGOE}`}>Ps</span>
          <svg width="14" height="16" viewBox="0 0 14 16" className="absolute bottom-[-4px] right-[-2px]">
            <path d="M7 1Q4 3 1 3q-1 9 6 12 7-3 6-12-3 0-6-2z" fill="#ffe04d" stroke="#eee" strokeWidth="1.500" />
            <path d="M7 2Q4 4 2 4v4h5zM7 8h5q-1 4-5 6z" fill="#2878ce" />
          </svg>
        </div>
      </TaskButton>
      <TaskButton className="ml-[4px] from-[#9b9b9b] via-[#555156] to-[#3c383d]">
        <svg width="31" height="30" viewBox="0 0 31 30" className="mb-[3px]">
          <path d="M8 1h21v28H1V8z" fill="#d9512c" stroke="#f5b79d" />
          <path d="M3 9l6-6h10v22H3z" fill="#f9e4da" />
          <path d="M6 5h8q6 1 6 6t-6 6h-3v5H6zm5 4v4q3 0 3-2t-3-2z" fill="#cc4420" fillRule="evenodd" />
          <path d="M12 19l17-6 1 12-7 4-11-2z" fill="#fff" stroke="#e07658" /><circle cx="21" cy="19" r="3.500" fill="#e3633e" /><path d="M14 26l6-3 7 2" stroke="#e07658" fill="none" />
        </svg>
      </TaskButton>
      <div className={`ml-auto flex items-center text-white ${SEGOE}`}>
        <span className="pb-[5px] text-[11px] text-[#ddd]">PT</span>
        <svg width="7" height="4" className="ml-[17px]"><path d="M0 4h7L3.500 0z" fill="#fff" /></svg>
        <svg width="64" height="16" viewBox="0 0 64 16" className="ml-[13px]" fill="none" stroke="#fff">
          <path d="M2 1v14" strokeWidth="1.500" /><path d="M3 2h5l2 1h4v6H3z" fill="#eee" stroke="none" />
          <circle cx="11" cy="10.500" r="4.500" fill="#d53c35" stroke="none" /><path d="M9 8.500l4 4m0-4l-4 4" strokeWidth="1.500" />
          <path d="M29.500 3.500h10v8h-9M30 14.500h9M27 5v9h4M25 1v4h4V1" strokeWidth="1.300" />
          <path d="M50 6h2l4-4v12l-4-4h-2z" fill="#fff" />
          <path d="M58 5q2 3 0 6M60 3q3 5 0 10" stroke="#ccc" />
        </svg>
        <div className="ml-[12px] flex w-[62px] flex-col items-center pb-[1px] text-[11px] leading-[17px] tracking-[-.2px]"><span className="tracking-[.1px]">14:23</span><span>03/03/2014</span></div>
        <div className="ml-[11px] h-[38px] w-[14px] border border-[#777] bg-gradient-to-b from-[#777] to-[#221f25]" />
      </div>
    </div>
  );
}

export default function App() {
  return (
    <div className={`relative flex h-[768px] w-[1024px] flex-col overflow-hidden bg-[#d6d6d6] text-[#111] shadow-[inset_1px_0_0_#888,inset_-1px_0_0_#888] ${UI}`}>
      <MenuBar />
      <div className="ml-[4px] flex h-[691px] w-[1016px] shrink-0 flex-col border border-[#444]">
        <OptionsBar />
        <div className="flex flex-1">
          <Toolbox />
          <Workspace />
          <RightDock />
        </div>
      </div>
      <div className="mx-px h-[5px] shrink-0 bg-[#e4e4e4]" />
      <Taskbar />
      <LayerStyleDialog />
    </div>
  );
}
